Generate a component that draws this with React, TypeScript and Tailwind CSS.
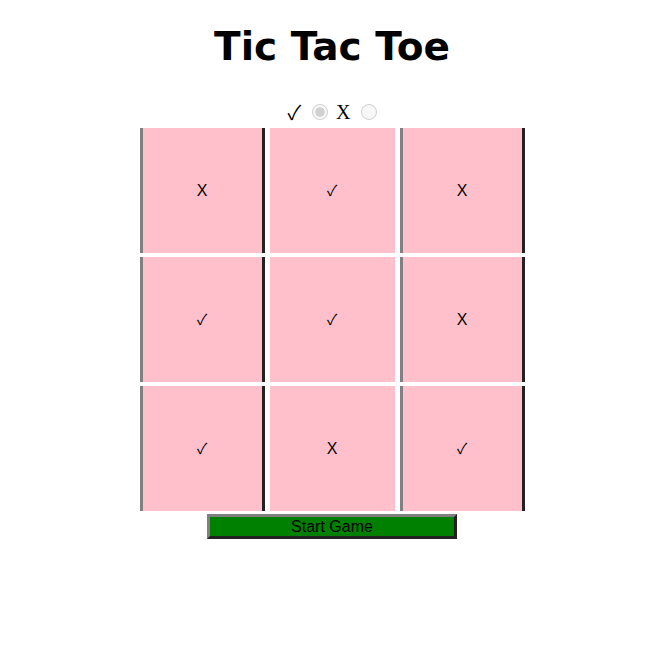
import type React from "react";

const board: string[] = ["X", "✓", "X", "✓", "✓", "X", "✓", "X", "✓"];

const Cell: React.FC<{ value: string; col: number }> = ({ value, col }) => {
  const edged = col !== 1;
  return (
    <div
      className={`h-[125px] w-[125px] bg-[#ffc0cb] flex items-center justify-center text-base text-black ${
        edged ? "border-l-[3px] border-r-[3px] border-l-[#808080] border-r-[#222222]" : ""
      }`}
    >
      {value === "✓" ? (
        <span className="font-['Noto_Sans_CJK_JP',sans-serif] text-[15px]">✓</span>
      ) : (
        value
      )}
    </div>
  );
};

const App: React.FC = () => {
  return (
    <main className="min-h-screen bg-white pl-[6px] font-['Liberation_Sans',Arial,sans-serif]">
      <div className="flex flex-col items-center">
        <h1 className="mt-[21px] text-[39px] leading-[52px] font-bold font-['DejaVu_Sans',sans-serif]">
          Tic Tac Toe
        </h1>

        {/* player choice */}
        <div className="mt-[27px] flex items-center h-[24px] font-['Liberation_Serif',serif] text-xl">
          <span className="font-['Noto_Sans_CJK_JP',serif]">✓</span>
          <input type="radio" name="player" checked disabled readOnly className="ml-[11px] mr-[8px] h-4 w-4" />
          <span>X</span>
          <input type="radio" name="player" disabled className="ml-[10px] h-4 w-4" />
        </div>

        <div className="mt-[4px] grid grid-cols-[125px_125px_125px] gap-x-[5px] gap-y-[4px]">
          {board.map((v, i) => (
            <Cell key={i} value={v} col={i % 3} />
          ))}
        </div>

        <button className="mt-[3px] h-[25px] w-[250px] bg-[#008000] text-base leading-none text-black border-[3px] border-t-[#808080] border-l-[#808080] border-r-[#222222] border-b-[#222222]">
          Start Game
        </button>
      </div>
    </main>
  );
};

export default App;
